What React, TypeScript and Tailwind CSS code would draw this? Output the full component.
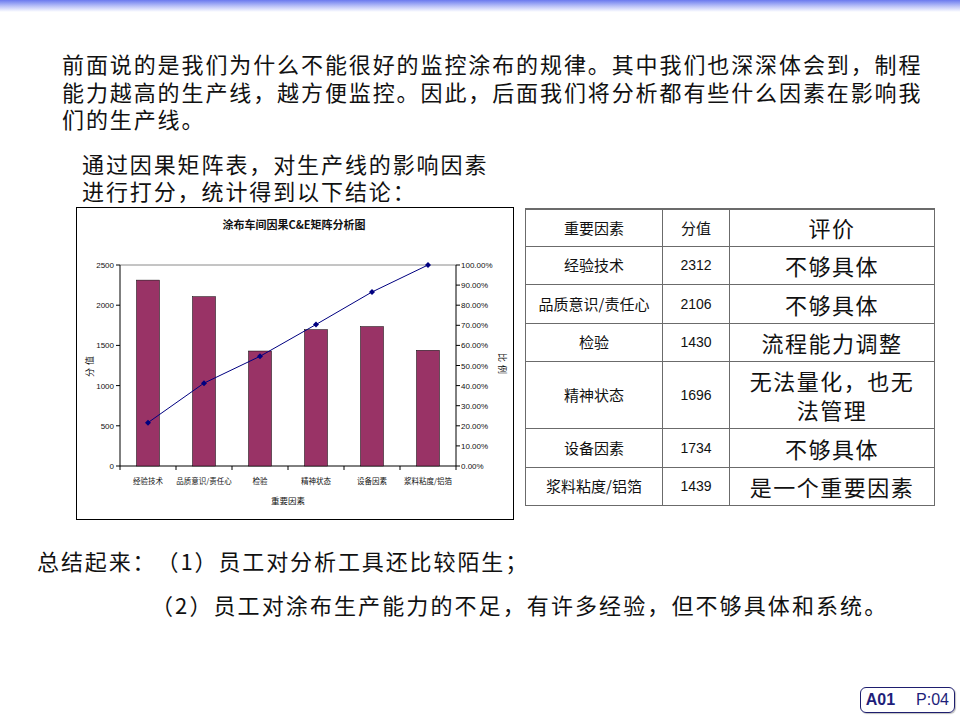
import React from "react";

const CJK = "font-['Noto_Sans_CJK_SC','Noto_Sans',sans-serif]";

const factors = [
    { name: "经验技术", value: 2312, note: "不够具体" },
    { name: "品质意识/责任心", value: 2106, note: "不够具体" },
    { name: "检验", value: 1430, note: "流程能力调整" },
    { name: "精神状态", value: 1696, note: "无法量化，也无法管理" },
    { name: "设备因素", value: 1734, note: "不够具体" },
    { name: "浆料粘度/铝箔", value: 1439, note: "是一个重要因素" },
];

// plot area in svg coords
const PL = 43, PR = 379, PT = 57, PB = 258;
const PH = PB - PT;
const step = (PR - PL) / factors.length;

function Chart() {
    const total = factors.reduce((s, f) => s + f.value, 0);
    let cum = 0;
    const points = factors.map((f, i) => {
        cum += f.value;
        return { x: PL + step * (i + 0.5), y: PB - (cum / total) * PH };
    });

    return (
        <svg width="436" height="311" viewBox="0 0 436 311" className="block">
            <text x="217" y="21" textAnchor="middle" fontSize="11" fontWeight="700" fill="#111"
                fontFamily="'Noto Sans CJK SC', sans-serif">涂布车间因果C&amp;E矩阵分析图</text>

            {/* plot frame */}
            <line x1={PL} y1={PT} x2={PR} y2={PT} stroke="#8a8a8a" strokeWidth="1" />
            <line x1={PL} y1={PT} x2={PL} y2={PB} stroke="#000" strokeWidth="1" />
            <line x1={PR} y1={PT} x2={PR} y2={PB} stroke="#000" strokeWidth="1" />
            <line x1={PL} y1={PB} x2={PR} y2={PB} stroke="#000" strokeWidth="1" />

            {/* left axis */}
            {[0, 500, 1000, 1500, 2000, 2500].map((v) => {
                const y = PB - (v / 2500) * PH;
                return (
                    <g key={v}>
                        <line x1={PL - 4} y1={y} x2={PL} y2={y} stroke="#000" />
                        <text x={PL - 6} y={y + 3} textAnchor="end" fontSize="8" fill="#111"
                            fontFamily="'Liberation Sans', sans-serif">{v}</text>
                    </g>
                );
            })}

            {/* right axis */}
            {Array.from({ length: 11 }, (_, i) => i * 10).map((p) => {
                const y = PB - (p / 100) * PH;
                return (
                    <g key={p}>
                        <line x1={PR} y1={y} x2={PR + 4} y2={y} stroke="#000" />
                        <text x={PR + 5} y={y + 3} fontSize="8" fill="#111"
                            fontFamily="'Liberation Sans', sans-serif">{p.toFixed(2)}%</text>
                    </g>
                );
            })}

            {/* category ticks */}
            {Array.from({ length: factors.length + 1 }, (_, i) => (
                <line key={i} x1={PL + step * i} y1={PB} x2={PL + step * i} y2={PB + 4} stroke="#000" />
            ))}

            {/* bars */}
            {factors.map((f, i) => {
                const h = (f.value / 2500) * PH;
                const cx = PL + step * (i + 0.5);
                return (
                    <rect key={f.name} x={cx - 11.5} y={PB - h} width="23" height={h}
                        fill="#993366" stroke="#000" strokeWidth="0.5" />
                );
            })}

            {/* cumulative line */}
            <polyline points={points.map((p) => `${p.x},${p.y}`).join(" ")} fill="none" stroke="#000080" strokeWidth="1" />
            {points.map((p, i) => (
                <polygon key={i} points={`${p.x},${p.y - 3} ${p.x + 3},${p.y} ${p.x},${p.y + 3} ${p.x - 3},${p.y}`} fill="#000080" />
            ))}

            {/* category labels */}
            {factors.map((f, i) => (
                <text key={f.name} x={PL + step * (i + 0.5)} y="276" textAnchor="middle" fontSize="7.5" fill="#111"
                    fontFamily="'Noto Sans CJK SC', sans-serif">{f.name}</text>
            ))}

            <text x="211" y="296" textAnchor="middle" fontSize="8.5" fill="#111"
                fontFamily="'Noto Sans CJK SC', sans-serif">重要因素</text>
            <text x="16" y="157" textAnchor="middle" fontSize="9" fill="#111" transform="rotate(-90 16 157)"
                fontFamily="'Noto Sans CJK SC', sans-serif" letterSpacing="3">分值</text>
            <text x="422" y="157" textAnchor="middle" fontSize="9" fill="#111" transform="rotate(90 422 157)"
                fontFamily="'Noto Sans CJK SC', sans-serif" letterSpacing="3">比例</text>
        </svg>
    );
}

function FactorTable() {
    const heights = ["h-[38px]", "h-[38px]", "h-[39px]", "h-[38px]", "h-[67px]", "h-[39px]", "h-[38px]"];
    return (
        <table className={`border-collapse border-t-2 border-l border-[#6b6b6b] ${CJK} text-[#111]`}>
            <colgroup>
                <col className="w-[137px]" />
                <col className="w-[67px]" />
                <col className="w-[205px]" />
            </colgroup>
            <tbody>
                <tr className={heights[0]}>
                    <td className="border border-[#6b6b6b] text-center text-[15px]">重要因素</td>
                    <td className="border border-[#6b6b6b] text-center text-[15px]">分值</td>
                    <td className="border border-[#6b6b6b] text-center text-[22px] tracking-[1.5px]">评价</td>
                </tr>
                {factors.map((f, i) => (
                    <tr key={f.name} className={heights[i + 1]}>
                        <td className="border border-[#6b6b6b] text-center text-[15px]">{f.name}</td>
                        <td className="border border-[#6b6b6b] text-center text-[14px] font-['Liberation_Sans',sans-serif]">{f.value}</td>
                        <td className="border border-[#6b6b6b] text-center text-[22px] tracking-[1.5px] leading-[29px] px-[14px]">{f.note}</td>
                    </tr>
                ))}
            </tbody>
        </table>
    );
}

export default function App() {
    return (
        <div className={`w-[960px] h-[720px] bg-white flex flex-col overflow-hidden text-[#111] ${CJK} [text-spacing-trim:space-all]`}>
            <div className="h-[12px] shrink-0 bg-gradient-to-b from-[#6c79ee] via-[#b9c0f7] to-white" />

            <p className="mt-[38px] pl-[62px] text-[22px] tracking-[1.9px] leading-[27.5px]">
                前面说的是我们为什么不能很好的监控涂布的规律。其中我们也深深体会到，制程<br />
                能力越高的生产线，越方便监控。因此，后面我们将分析都有些什么因素在影响我<br />
                们的生产线。
            </p>

            <p className="mt-[17px] pl-[82px] text-[22px] tracking-[1.9px] leading-[27px]">
                通过因果矩阵表，对生产线的影响因素<br />
                进行打分，统计得到以下结论：
            </p>

            <div className="mt-[3px] flex items-start pl-[76px]">
                <div className="border border-black w-[438px] h-[313px]">
                    <Chart />
                </div>
                <div className="ml-[11px] mt-[1px]">
                    <FactorTable />
                </div>
            </div>

            <div className="mt-[25px] pl-[37px] text-[22px] tracking-[1.9px] leading-[30px]">
                总结起来：（1）员工对分析工具还比较陌生；
            </div>
            <div className="mt-[14px] pl-[151px] text-[22px] tracking-[2.1px] leading-[30px]">
                （2）员工对涂布生产能力的不足，有许多经验，但不够具体和系统。
            </div>

            <div className="mt-auto mb-[7px] mr-[5px] flex justify-end">
                <div className="flex items-center gap-[21px] px-[5px] h-[26px] rounded-[6px] border-[1.5px] border-[#1e1e6e] shadow-[1px_1px_1px_rgba(0,0,0,0.25)] font-['Liberation_Sans',sans-serif] text-[#1e1e7a] text-[16px]">
                    <span className="font-bold">A01</span>
                    <span>P:04</span>
                </div>
            </div>
        </div>
    );
}
